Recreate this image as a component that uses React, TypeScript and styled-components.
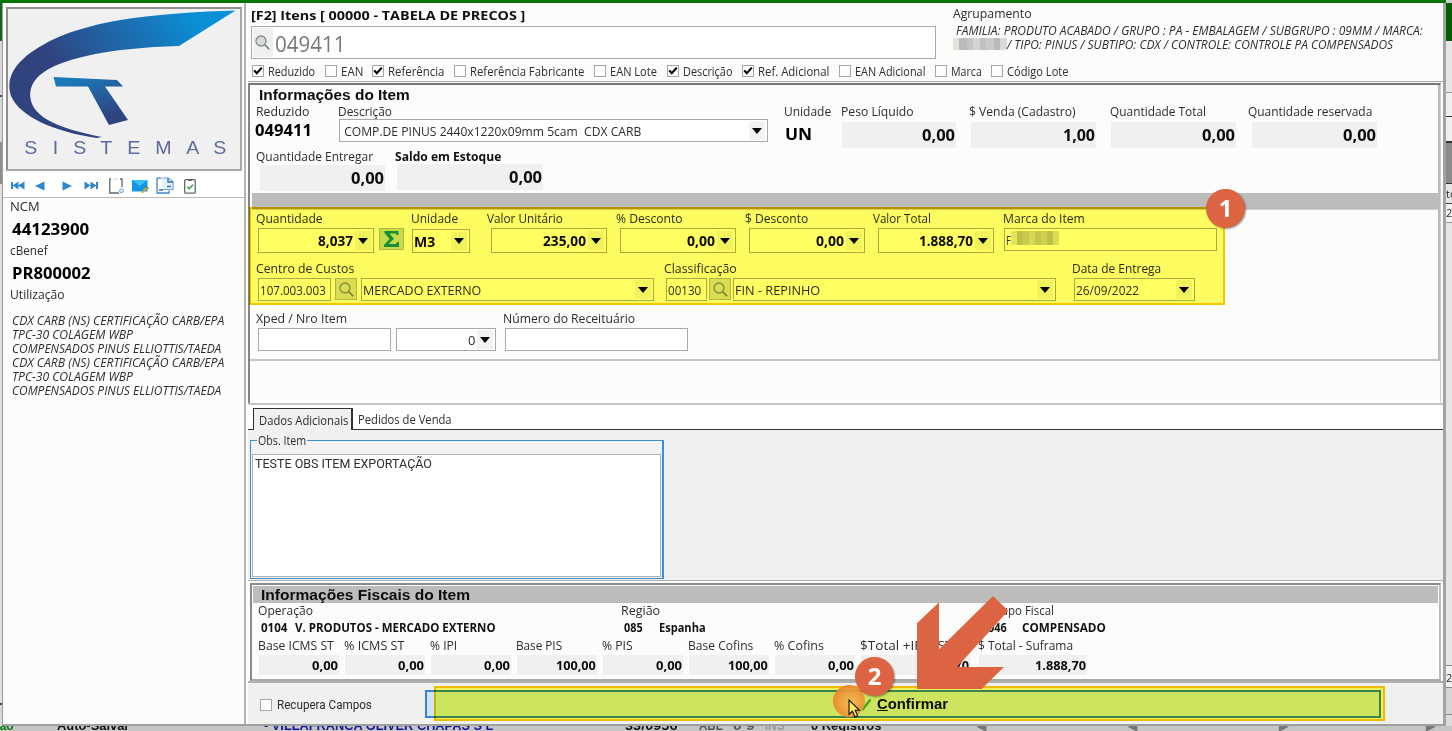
import { ReactNode, useLayoutEffect, useRef, useState } from "react";
import styled, { createGlobalStyle, css } from "styled-components";

const UI_FONT = `"Open Sans", "Noto Sans", sans-serif`;
const SANS_FONT = `"Liberation Sans", Arial, sans-serif`;

const GlobalStyle = createGlobalStyle`
  * {
    box-sizing: border-box;
  }
  body {
    margin: 0;
    overflow: hidden;
    font-family: ${UI_FONT};
    font-size: 13px;
    color: #2b2d30;
  }
`;

const FitOuter = styled.span<{ $w: number }>`
  display: inline-block;
  flex: none;
  width: ${({ $w }) => $w}px;
  text-align: left;
  white-space: pre;
`;

const FitInner = styled.span`
  display: inline-block;
  transform-origin: left center;
`;

// condenses or stretches a string to the width it has in the form
const Fit = ({ w, children }: { w: number; children: ReactNode }) => {
  const ref = useRef<HTMLSpanElement>(null);
  const [scale, setScale] = useState(1);
  useLayoutEffect(() => {
    if (ref.current?.offsetWidth) setScale(w / ref.current.offsetWidth);
  }, [w, children]);
  return (
    <FitOuter $w={w}>
      <FitInner ref={ref} style={{ transform: `scaleX(${scale})` }}>
        {children}
      </FitInner>
    </FitOuter>
  );
};

const Screen = styled.div`
  position: relative;
  display: grid;
  grid-template-columns: 2px 1444px 6px;
  grid-template-rows: 3px 723px 5px;
  width: 1452px;
  height: 731px;
  overflow: hidden;
  background: #e3e3e2;
`;

const TopStrip = styled.div`
  grid-column: 1 / -1;
  background: #047504;
  border-right: 6px solid #c9cfd2;
`;

const LeftStrip = styled.div`
  background: linear-gradient(
    #14681a 0 38px,
    #d8d8d8 38px 92px,
    #555 92px 94px,
    #d8d8d8 94px 139px,
    #8e8e8e 139px 181px,
    #e0e0e0 181px 700px,
    #444 700px 702px,
    #d8d8d8 702px
  );
`;

const RightStrip = styled.div`
  overflow: hidden;
  font-size: 11px;
  line-height: 14px;
  background: linear-gradient(
    #045f04 0 38px,
    #e6e6e6 38px 89px,
    #999 89px 90px,
    #f0f0f0 90px 113px,
    #333 113px 114px,
    #f0f0f0 114px 138px,
    #333 138px 140px,
    #8b8b8b 140px 180px,
    #333 180px 181px,
    #e6e6e6 181px 200px,
    #444 200px 201px,
    #f3f3f3 201px 219px,
    #999 219px 220px,
    #e6e6e6 220px 662px,
    #888 662px 663px,
    #f0f0f0 663px 684px,
    #888 684px 685px,
    #d5d5d5 685px 711px,
    #888 711px 712px,
    #dcdcdc 712px
  );

  p {
    margin: 184px 0 0;
  }
  p + p {
    margin-top: 5px;
  }
  p + p + p {
    margin-top: 451px;
  }
`;

const StatusStrip = styled.div`
  grid-column: 1 / -1;
  display: flex;
  overflow: hidden;
  background: #c6c6c5;
  font: bold 12px / 1px ${SANS_FONT};
  color: #111;
`;

const StatusItem = styled.span<{ $ml: number; $color?: string }>`
  margin-left: ${({ $ml }) => $ml}px;
  color: ${({ $color }) => $color || "#111"};
`;

const Dialog = styled.div`
  display: flex;
  background: #fcfcfa;
  border-left: 1px solid #9a9a9a;
  border-right: 3px solid #a3a3a2;
  border-bottom: 2px solid #a0a09f;
`;

const Sidebar = styled.aside`
  width: 243px;
  border-right: 2px solid #b4b4b3;
  padding: 4px 0 0 0;
`;

const LogoBox = styled.div`
  width: 236px;
  height: 164px;
  margin-left: 3px;
  border: 2px solid #8f8f8f;
  border-right-color: #a8a8a8;
  border-bottom-color: #a8a8a8;
  background: #f0f0f0;

  svg {
    display: block;
  }
`;

const LogoWord = styled.div`
  display: flex;
  justify-content: space-between;
  margin: -6px 14px 0 17px;
  font: 17.5px / 20px ${SANS_FONT};
  color: #5d6a9b;

  span {
    transform: scaleX(1.12);
  }
`;

const Toolbar = styled.div`
  display: flex;
  align-items: center;
  height: 27px;
  padding: 3px 0 0 8px;
  border-bottom: 1px solid #b9b9b9;
  background: #fff;

  svg {
    flex: none;
  }
`;

const SideLabel = styled.div`
  padding-left: 7px;
  font-size: 13px;
  line-height: 16px;
`;

const SideValue = styled.div`
  padding: 2px 0 0 9px;
  font-size: 16px;
  font-weight: 700;
  line-height: 26px;
  color: #000;
`;

const Usage = styled.div`
  padding: 12px 0 0 9px;
  font-size: 12px;
  font-style: italic;
  line-height: 14px;
`;

const Main = styled.main`
  flex: 1;
  min-width: 0;
  display: flex;
  flex-direction: column;
  padding-left: 2px;
`;

const Header = styled.header`
  display: flex;
  height: 79px;
  border-bottom: 1px solid #aaa;
`;

const SearchArea = styled.div`
  width: 699px;
  padding: 4px 0 0 3px;
`;

const Title = styled.div`
  font-size: 13px;
  font-weight: 700;
  line-height: 17px;
  color: #111;
`;

const SearchBox = styled.div`
  display: flex;
  align-items: center;
  width: 685px;
  height: 33px;
  margin-top: 2px;
  border: 1px solid #aaa;
  background: #fff;
  font-size: 22px;
  line-height: 28px;
  color: #777;
`;

const SearchIconPad = styled.span`
  display: flex;
  width: 20px;
  height: 29px;
  margin: 0 2px 0 1px;
  padding: 6px 0 0 1px;
  background: #f0f0f0;
`;

const CheckRow = styled.div`
  display: flex;
  height: 18px;
  margin: 4px 0 0 1px;
  width: 900px;
`;

const CheckItem = styled.label<{ $w?: number }>`
  display: flex;
  align-items: center;
  gap: 4px;
  flex: none;
  width: ${({ $w }) => ($w ? `${$w}px` : "auto")};
  font-size: 12px;
  line-height: 18px;
`;

const CheckSquare = styled.span`
  display: flex;
  width: 12px;
  height: 12px;
  margin-top: -3px;
  border: 1px solid #a6a6a6;
  background: #fff;
`;

const Grouping = styled.div`
  padding-top: 2px;
  padding-left: 6px;

  i {
    display: flex;
    font-size: 12px;
    line-height: 14px;
  }
`;

const GroupingLabel = styled.div`
  height: 19px;
  line-height: 16px;
`;

const Mosaic = styled.span<{ $w: number; $h: number; $tint?: boolean }>`
  width: ${({ $w }) => $w}px;
  height: ${({ $h }) => $h}px;
  background: linear-gradient(
    90deg,
    #e2e2de 0 12%,
    #b9bab9 12% 25%,
    #c4c4c2 25% 37%,
    #d4d5d3 37% 50%,
    #bfc1c3 50% 62%,
    #cacac9 62% 75%,
    #b8b9b9 75% 87%,
    #d9d9d6 87%
  );
  ${({ $tint }) =>
    $tint &&
    css`
      opacity: 0.9;
      margin: 2px 0 auto;
    `}
`;

const ItemPanel = styled.section`
  height: 320px;
  margin: 1px 2px 0 0;
  border-top: 2px solid #777;
  border-left: 2px solid #858585;
  border-right: 1px solid #d0d0d0;
`;

const ItemBody = styled.div`
  height: 276px;
  padding-left: 1px;
  border-bottom: 2px solid #c4c4c4;
  border-right: 2px solid #bbb;
`;

const PanelTitle = styled.h2`
  margin: 0;
  padding-left: 8px;
  font: bold 14.5px / 20px ${SANS_FONT};
  height: 18px;
  color: #0c0c0c;
`;

const Divider = styled.div`
  height: 17px;
  margin-left: 1px;
  border-bottom: 1px solid #d0d0d0;
  background: #bcbcba;
`;

const Row = styled.div<{ $h: number }>`
  display: flex;
  height: ${({ $h }) => $h}px;
  padding-left: 5px;
`;

const Cell = styled.div<{ $w: number }>`
  flex: none;
  width: ${({ $w }) => $w}px;
`;

const Label = styled.div<{ $bold?: boolean }>`
  height: 16px;
  font-size: 13px;
  line-height: 16px;
  white-space: nowrap;
  ${({ $bold }) => $bold && "font-weight: 700; color: #111;"}
`;

const Controls = styled.div<{ $ml?: number; $mt?: number }>`
  display: flex;
  align-items: flex-start;
  margin-left: ${({ $ml = 2 }) => $ml}px;
  margin-top: ${({ $mt = 2 }) => $mt}px;
`;

const ReadOnly = styled.div<{ $w: number; $h?: number; $size?: number }>`
  width: ${({ $w }) => $w}px;
  height: ${({ $h = 26 }) => $h}px;
  padding-right: 1px;
  background: #f0f0ef;
  font-size: ${({ $size = 16 }) => $size}px;
  font-weight: 700;
  line-height: ${({ $h = 26 }) => $h}px;
  text-align: right;
  color: #0c0c0c;
`;

const Strong = styled.div`
  font-size: 16px;
  font-weight: 700;
  line-height: 22px;
  color: #000;
`;

const Box = styled.div<{
  $w: number;
  $h?: number;
  $right?: boolean;
  $bold?: boolean;
  $mr?: number;
}>`
  display: flex;
  align-items: center;
  flex: none;
  width: ${({ $w }) => $w}px;
  height: ${({ $h = 23 }) => $h}px;
  margin-right: ${({ $mr = 0 }) => $mr}px;
  padding-left: 1px;
  border: 1px solid #a9a9a9;
  background: #fff;
  justify-content: ${({ $right }) => ($right ? "flex-end" : "flex-start")};
  font-size: 13px;
  ${({ $bold }) => $bold && "font-size: 14px; font-weight: 700; color: #0c0c0c;"}
`;

const ArrowPad = styled.span<{ $end?: boolean }>`
  display: flex;
  align-items: center;
  justify-content: center;
  width: 16px;
  height: 19px;
  margin: 0 2px 0 2px;
  background: #f2f2f2;
  ${({ $end }) => $end && "margin-left: auto;"}

  &::after {
    content: "";
    border: 5px solid transparent;
    border-top: 6px solid #000;
    border-bottom: 0;
  }
`;

const IconButton = styled.span<{ $w: number; $mr: number; $green?: boolean }>`
  display: flex;
  align-items: center;
  justify-content: center;
  width: ${({ $w }) => $w}px;
  height: 22px;
  margin-right: ${({ $mr }) => $mr}px;
  border: 1px solid #b5b5b0;
  background: ${({ $green }) => ($green ? "#c4dcb8" : "#dcdcd8")};
`;

const TabBar = styled.div`
  display: flex;
  align-items: flex-end;
  height: 27px;
  padding-left: 5px;
  border-top: 2px solid #c5c5c4;
  border-bottom: 1px solid #333;
  background: #fff;
`;

const Tab = styled.div<{ $active?: boolean }>`
  height: 21px;
  padding-left: 5px;
  font-size: 13px;
  line-height: 23px;
  ${({ $active }) =>
    $active &&
    css`
      width: 100px;
      height: 22px;
      margin-bottom: -1px;
      background: #f0f0ef;
      border: solid #333;
      border-width: 1px 2px 0 1px;
    `}
`;

const TabBody = styled.div`
  height: 151px;
  padding: 10px 0 0 2px;
  background: #f0f0ef;
  border-bottom: 1px solid #b0b0b0;
`;

const ObsGroup = styled.div`
  position: relative;
  width: 414px;
  height: 139px;
  padding: 13px 1px 1px;
  border: 1px solid #3c8fd2;
  border-right-width: 2px;
  background: #f3f3f3;
`;

const ObsLegend = styled.div`
  position: absolute;
  top: -9px;
  left: 6px;
  padding: 0 1px;
  font-size: 12px;
  line-height: 17px;
  background: #f1f1f1;
`;

const ObsText = styled.div`
  height: 123px;
  padding-left: 2px;
  border: 1px solid #b0b0b0;
  background: #fff;
  font: 13px / 17px Roboto, ${SANS_FONT};
`;

const FiscalPanel = styled.section`
  height: 98px;
  margin: 2px 2px 0 2px;
  padding: 1px;
  border: 2px solid #8a8a8a;
  border-right-color: #bbb;
  border-bottom-color: #aaa;
`;

const FiscalTitle = styled.h2`
  margin: 0;
  height: 17px;
  padding-left: 8px;
  background: #bcbcba;
  font: bold 14.5px / 18px ${SANS_FONT};
  color: #0c0c0c;
`;

const FiscalRow = styled.div<{ $h: number; $bold?: boolean }>`
  display: flex;
  height: ${({ $h }) => $h}px;
  padding-left: 5px;
  font-size: 12.5px;
  line-height: ${({ $h }) => $h}px;
  ${({ $bold }) => $bold && "font-weight: 700; font-size: 12px; color: #111;"}
`;

const Footer = styled.footer`
  display: flex;
  flex: 1;
  padding: 3px 0 0 12px;
  border-top: 2px solid #b0b0af;
  background: #f0f0ef;
`;

const RecoverField = styled.label`
  display: flex;
  align-items: center;
  gap: 5px;
  width: 165px;
  height: 37px;
  font: 13px Roboto, ${SANS_FONT};

  ${CheckSquare} {
    margin-top: 0;
  }
`;

const ConfirmButton = styled.button`
  display: flex;
  align-items: center;
  width: 956px;
  height: 28px;
  margin-top: 4px;
  padding: 0 0 0 431px;
  border: 2px solid #3b83c4;
  border-radius: 0;
  background: #cde4f6;
  font: bold 14px ${SANS_FONT};
  color: #0c0c0c;

  svg {
    margin-right: 5px;
  }
`;

// annotations lie over the dialog
const Highlight = styled.div<{ $x: number; $y: number; $w: number; $h: number }>`
  position: absolute;
  left: ${({ $x }) => $x}px;
  top: ${({ $y }) => $y}px;
  width: ${({ $w }) => $w}px;
  height: ${({ $h }) => $h}px;
  border: 2px solid #fcc800;
  background: #ffff62;
  mix-blend-mode: multiply;
`;

const Badge = styled.div<{ $x: number; $y: number }>`
  position: absolute;
  left: ${({ $x }) => $x}px;
  top: ${({ $y }) => $y}px;
  width: 39px;
  height: 39px;
  border-radius: 50%;
  background: #dc6443;
  box-shadow: 1px 1px 2px rgba(0, 0, 0, 0.4);
  font: bold 24px / 37px "Open Sans", sans-serif;
  text-align: center;
  color: #fff;
`;

const Glow = styled.div`
  position: absolute;
  left: 833px;
  top: 685px;
  width: 32px;
  height: 32px;
  border-radius: 50%;
  background: radial-gradient(
    circle at 55% 55%,
    rgba(240, 190, 80, 0.95),
    rgba(235, 140, 50, 0.95) 65%,
    rgba(225, 120, 50, 0.85)
  );
`;

const Marker = styled.svg`
  position: absolute;
  left: 840px;
  top: 590px;
`;

const Magnifier = () => (
  <svg width="17" height="17" viewBox="0 0 17 17" fill="none">
    <circle cx="7" cy="7" r="5" fill="#d5dddb" stroke="#858b88" strokeWidth="1.3" />
    <path d="M10.8 10.8L15.2 15.2" stroke="#777" strokeWidth="1.6" />
  </svg>
);

const Check = ({ label, w, tw, on }: { label: string; w?: number; tw: number; on?: boolean }) => (
  <CheckItem $w={w}>
    <CheckSquare>
      {on && (
        <svg width="10" height="10" viewBox="0 0 10 10" fill="none">
          <path d="M1.2 4.4L3.8 7.2L8.8 1.6" stroke="#000" strokeWidth="2.1" />
        </svg>
      )}
    </CheckSquare>
    <Fit w={tw}>{label}</Fit>
  </CheckItem>
);

const Logo = () => (
  <svg width="232" height="135" viewBox="8 9 232 135">
    <defs>
      <linearGradient id="arc" x1="40" y1="110" x2="190" y2="10" gradientUnits="userSpaceOnUse">
        <stop offset="0.2" stopColor="#30437f" />
        <stop offset="1" stopColor="#0b8fd6" />
      </linearGradient>
      <linearGradient id="tee" x1="80" y1="78" x2="100" y2="122" gradientUnits="userSpaceOnUse">
        <stop offset="0" stopColor="#1b79b9" />
        <stop offset="1" stopColor="#30437f" />
      </linearGradient>
    </defs>
    <path
      d="M235.500 10.500L179 46C108 48 68 58 47 70C30 80 27 94 33 106C41 121 66 130 102 137L97 138C55 132 20 117 11 96C4 74 20 56 52 40C96 19 160 13 235.500 10.500Z"
      fill="url(#arc)"
    />
    <path d="M53.500 77L117 80L123 86.500H105L128 120L109 125L88 86.500H56Z" fill="url(#tee)" />
  </svg>
);

const NavIcon = styled.svg<{ $ml?: number }>`
  margin-left: ${({ $ml = 0 }) => $ml}px;
`;

const NavIcons = () => (
  <>
    <NavIcon width="14" height="9" viewBox="0 0 14 9" fill="#2c87d0">
      <path d="M0 1H2V8H0ZM7.500 .5V8.500L1.500 4.500ZM13.500 .5V8.500L7 4.500Z" />
    </NavIcon>
    <NavIcon $ml={10} width="10" height="10" viewBox="0 0 10 10" fill="#2c87d0">
      <path d="M9.500 .5V9.500L0 5Z" />
    </NavIcon>
    <NavIcon $ml={17} width="10" height="10" viewBox="0 0 10 10" fill="#2c87d0">
      <path d="M.5 .5V9.500L10 5Z" />
    </NavIcon>
    <NavIcon $ml={12} width="14" height="9" viewBox="0 0 14 9" fill="#2c87d0">
      <path d="M.5 .5V8.500L6.500 4.500ZM6.500 .5V8.500L12.500 4.500ZM12 1H14V8H12Z" />
    </NavIcon>
    <NavIcon $ml={11} width="16" height="16" viewBox="0 0 16 16" fill="none">
      <path d="M2 1H.8V15H10M11 1H13V9" stroke="#666" strokeWidth="1.3" />
      <path d="M4 1H9" stroke="#ccc" />
      <circle cx="12.5" cy="12.8" r="2" fill="#d5eafb" stroke="#69aee8" />
    </NavIcon>
    <NavIcon $ml={7} width="17" height="16" viewBox="0 0 17 16">
      <path d="M0 2H15.500V13.500H0Z" fill="#1594e0" />
      <path d="M0 2H15.500L7.800 8Z" fill="#35c4f5" />
      <path d="M9 14.500L14.800 8.200L16.500 9.800L11 15Z" fill="#d9a62b" />
      <path d="M14.300 8.700L16.500 10.600" stroke="#444" />
    </NavIcon>
    <NavIcon $ml={7} width="18" height="17" viewBox="0 0 18 17" fill="none">
      <path d="M5.500 1.200H1V16H13V13.500" stroke="#3f86cd" strokeWidth="1.3" />
      <path d="M6.500 1H12.500L17 4.500V12.500H6.500" fill="#e6f1fb" stroke="#6ba5de" strokeWidth="1.1" />
      <path d="M12 1V5H17M3 13H7M11 9.500H15" stroke="#2f72b8" strokeWidth="1.3" />
    </NavIcon>
    <NavIcon $ml={10} width="12" height="16" viewBox="0 0 12 16" fill="none">
      <rect x=".7" y="1.7" width="10.5" height="13.5" rx="1" fill="#fff" stroke="#5d6a66" strokeWidth="1.3" />
      <path d="M4 1H8V3H4Z" fill="#5d6a66" />
      <path d="M3.200 8.800L5.200 10.800L9 6.800" stroke="#31954b" strokeWidth="1.5" />
    </NavIcon>
  </>
);

const Amount = ({ w, tw, value, mr }: { w: number; tw: number; value: string; mr?: number }) => (
  <Box $w={w} $h={25} $right $bold $mr={mr}>
    <Fit w={tw}>{value}</Fit>
    <ArrowPad />
  </Box>
);

const usage: [string, number][] = [
  ["CDX CARB (NS) CERTIFICAÇÃO CARB/EPA", 212],
  ["TPC-30 COLAGEM WBP", 121],
  ["COMPENSADOS PINUS ELLIOTTIS/TAEDA", 209],
];

const stock = [
  { label: "Peso Líquido", tw: 73, cell: 128, ml: 1, w: 114, value: "0,00", vw: 33 },
  { label: "$ Venda (Cadastro)", tw: 107, cell: 141, ml: 2, w: 125, value: "1,00", vw: 32 },
  { label: "Quantidade Total", tw: 96, cell: 138, ml: 1, w: 125, value: "0,00", vw: 33 },
  { label: "Quantidade reservada", tw: 124, cell: 140, ml: 4, w: 125, value: "0,00", vw: 33 },
];

const taxes = [
  { label: "Base ICMS ST", tw: 76, cell: 86, w: 80, value: "0,00", vw: 26 },
  { label: "% ICMS ST", tw: 60, cell: 86, w: 80, value: "0,00", vw: 26 },
  { label: "% IPI", tw: 27, cell: 86, w: 80, value: "0,00", vw: 26 },
  { label: "Base PIS", tw: 46, cell: 86, w: 80, value: "100,00", vw: 40 },
  { label: "% PIS", tw: 31, cell: 86, w: 80, value: "0,00", vw: 26 },
  { label: "Base Cofins", tw: 65, cell: 86, w: 80, value: "100,00", vw: 40 },
  { label: "% Cofins", tw: 50, cell: 86, w: 80, value: "0,00", vw: 26 },
  { label: "$Total +IPI +ST", tw: 93, cell: 118, w: 109, value: "1.888,70", vw: 51 },
  { label: "$ Total - Suframa", tw: 95, cell: 118, w: 108, value: "1.888,70", vw: 51 },
];

const App = () => (
  <>
    <GlobalStyle />
    <Screen>
      <TopStrip />
      <LeftStrip />
      <Dialog>
        <Sidebar>
          <LogoBox>
            <Logo />
            <LogoWord>
              {"SISTEMAS".split("").map((c, i) => (
                <span key={i}>{c}</span>
              ))}
            </LogoWord>
          </LogoBox>
          <Toolbar>
            <NavIcons />
          </Toolbar>
          <SideLabel><Fit w={30}>NCM</Fit></SideLabel>
          <SideValue><Fit w={77}>44123900</Fit></SideValue>
          <SideLabel><Fit w={38}>cBenef</Fit></SideLabel>
          <SideValue><Fit w={79}>PR800002</Fit></SideValue>
          <SideLabel><Fit w={55}>Utilização</Fit></SideLabel>
          <Usage>
            {[...usage, ...usage].map(([line, w], i) => (
              <div key={i}>
                <Fit w={w}>{line}</Fit>
              </div>
            ))}
          </Usage>
        </Sidebar>

        <Main>
          <Header>
            <SearchArea>
              <Title><Fit w={274}>[F2] Itens [ 00000 - TABELA DE PRECOS ]</Fit></Title>
              <SearchBox>
                <SearchIconPad><Magnifier /></SearchIconPad>
                <Fit w={70}>049411</Fit>
              </SearchBox>
              <CheckRow>
                <Check label="Reduzido" w={73} tw={47} on />
                <Check label="EAN" w={47} tw={22} />
                <Check label="Referência" w={82} tw={56} on />
                <Check label="Referência Fabricante" w={140} tw={114} />
                <Check label="EAN Lote" w={73} tw={47} />
                <Check label="Descrição" w={75} tw={49} on />
                <Check label="Ref. Adicional" w={97} tw={71} on />
                <Check label="EAN Adicional" w={96} tw={70} />
                <Check label="Marca" w={56} tw={31} />
                <Check label="Código Lote" tw={62} />
              </CheckRow>
            </SearchArea>
            <Grouping>
              <GroupingLabel><Fit w={79}>Agrupamento</Fit></GroupingLabel>
              <i>
                <Fit w={470}>
                  {" FAMILIA: PRODUTO ACABADO / GRUPO : PA - EMBALAGEM / SUBGRUPO : 09MM / MARCA:"}
                </Fit>
              </i>
              <i>
                <Mosaic $w={54} $h={12} />
                <Fit w={386}>/ TIPO: PINUS / SUBTIPO: CDX / CONTROLE: CONTROLE PA COMPENSADOS</Fit>
              </i>
            </Grouping>
          </Header>

          <ItemPanel>
            <ItemBody>
              <PanelTitle><Fit w={151}>Informações do Item</Fit></PanelTitle>
              <Row $h={45}>
                <Cell $w={82}>
                  <Label><Fit w={53}>Reduzido</Fit></Label>
                  <Controls $ml={-1} $mt={0}>
                    <Strong><Fit w={57}>049411</Fit></Strong>
                  </Controls>
                </Cell>
                <Cell $w={446}>
                  <Label><Fit w={54}>Descrição</Fit></Label>
                  <Controls $ml={1} $mt={0}>
                    <Box $w={429} $h={23}>
                      <Fit w={300}>{" COMP.DE PINUS 2440x1220x09mm 5cam  CDX CARB"}</Fit>
                      <ArrowPad $end />
                    </Box>
                  </Controls>
                </Cell>
                <Cell $w={57}>
                  <Label><Fit w={47}>Unidade</Fit></Label>
                  <Controls $ml={1} $mt={4}>
                    <Strong><Fit w={27}>UN</Fit></Strong>
                  </Controls>
                </Cell>
                {stock.map((s) => (
                  <Cell key={s.label} $w={s.cell}>
                    <Label><Fit w={s.tw}>{s.label}</Fit></Label>
                    <Controls $ml={s.ml} $mt={3}>
                      <ReadOnly $w={s.w}><Fit w={s.vw}>{s.value}</Fit></ReadOnly>
                    </Controls>
                  </Cell>
                ))}
              </Row>
              <Row $h={45}>
                <Cell $w={139}>
                  <Label><Fit w={117}>Quantidade Entregar</Fit></Label>
                  <Controls $ml={4} $mt={1}>
                    <ReadOnly $w={125}><Fit w={33}>0,00</Fit></ReadOnly>
                  </Controls>
                </Cell>
                <Cell $w={160}>
                  <Label $bold><Fit w={106}>Saldo em Estoque</Fit></Label>
                  <Controls $mt={0}>
                    <ReadOnly $w={146}><Fit w={33}>0,00</Fit></ReadOnly>
                  </Controls>
                </Cell>
              </Row>
              <Divider />
              <Row $h={50}>
                <Cell $w={155}>
                  <Label><Fit w={67}>Quantidade</Fit></Label>
                  <Controls>
                    <Amount w={116} tw={35} value="8,037" mr={5} />
                    <IconButton $w={25} $mr={0} $green>
                      <svg width="17" height="18" viewBox="0 0 17 18">
                        <path
                          d="M1.500 1H15.500V5H13.500L13 3.500H6.500L11 8.800L5.500 14H13L14 12H16V17H1V15L6.500 9L1.500 3Z"
                          fill="#1a8d83"
                        />
                      </svg>
                    </IconButton>
                  </Controls>
                </Cell>
                <Cell $w={76}>
                  <Label><Fit w={47}>Unidade</Fit></Label>
                  <Controls $ml={1} $mt={3}>
                    <Box $w={58} $h={24} $bold>
                      <Fit w={21}>M3</Fit>
                      <ArrowPad $end />
                    </Box>
                  </Controls>
                </Cell>
                <Cell $w={129}>
                  <Label><Fit w={76}>Valor Unitário</Fit></Label>
                  <Controls $ml={4}><Amount w={116} tw={43} value="235,00" /></Controls>
                </Cell>
                <Cell $w={129}>
                  <Label><Fit w={67}>% Desconto</Fit></Label>
                  <Controls $ml={4}><Amount w={116} tw={28} value="0,00" /></Controls>
                </Cell>
                <Cell $w={128}>
                  <Label><Fit w={63}>$ Desconto</Fit></Label>
                  <Controls $ml={4}><Amount w={116} tw={28} value="0,00" /></Controls>
                </Cell>
                <Cell $w={130}>
                  <Label><Fit w={58}>Valor Total</Fit></Label>
                  <Controls $ml={5}><Amount w={116} tw={54} value="1.888,70" /></Controls>
                </Cell>
                <Cell $w={216}>
                  <Label><Fit w={82}>Marca do Item</Fit></Label>
                  <Controls $ml={1}>
                    <Box $w={213}>
                      <Fit w={5}>F</Fit>
                      <Mosaic $w={48} $h={14} $tint />
                    </Box>
                  </Controls>
                </Cell>
              </Row>
              <Row $h={50}>
                <Cell $w={408}>
                  <Label><Fit w={98}>Centro de Custos</Fit></Label>
                  <Controls>
                    <Box $w={73} $mr={4}><Fit w={66}>107.003.003</Fit></Box>
                    <IconButton $w={22} $mr={4}><Magnifier /></IconButton>
                    <Box $w={293}>
                      <Fit w={118}>MERCADO EXTERNO</Fit>
                      <ArrowPad $end />
                    </Box>
                  </Controls>
                </Cell>
                <Cell $w={408}>
                  <Label><Fit w={73}>Classificação</Fit></Label>
                  <Controls>
                    <Box $w={41} $mr={2}><Fit w={33}>00130</Fit></Box>
                    <IconButton $w={22} $mr={2}><Magnifier /></IconButton>
                    <Box $w={323}>
                      <Fit w={85}>FIN - REPINHO</Fit>
                      <ArrowPad $end />
                    </Box>
                  </Controls>
                </Cell>
                <Cell $w={130}>
                  <Label><Fit w={89}>Data de Entrega</Fit></Label>
                  <Controls>
                    <Box $w={121}>
                      <Fit w={63}>26/09/2022</Fit>
                      <ArrowPad $end />
                    </Box>
                  </Controls>
                </Cell>
              </Row>
              <Row $h={48}>
                <Cell $w={247}>
                  <Label><Fit w={91}>Xped / Nro Item</Fit></Label>
                  <Controls>
                    <Box $w={133} $mr={5} />
                    <Box $w={100} $right>
                      <Fit w={7}>0</Fit>
                      <ArrowPad />
                    </Box>
                  </Controls>
                </Cell>
                <Cell $w={190}>
                  <Label><Fit w={132}>Número do Receituário</Fit></Label>
                  <Controls><Box $w={183} /></Controls>
                </Cell>
              </Row>
            </ItemBody>
          </ItemPanel>

          <TabBar>
            <Tab $active><Fit w={89}>Dados Adicionais</Fit></Tab>
            <Tab><Fit w={94}>Pedidos de Venda</Fit></Tab>
          </TabBar>
          <TabBody>
            <ObsGroup>
              <ObsLegend><Fit w={48}>Obs. Item</Fit></ObsLegend>
              <ObsText><Fit w={177}>TESTE OBS ITEM EXPORTAÇÃO</Fit></ObsText>
            </ObsGroup>
          </TabBody>

          <FiscalPanel>
            <FiscalTitle><Fit w={209}>Informações Fiscais do Item</Fit></FiscalTitle>
            <FiscalRow $h={16}>
              <Cell $w={363}><Fit w={55}>Operação</Fit></Cell>
              <Cell $w={367}><Fit w={39}>Região</Fit></Cell>
              <Cell $w={100}><Fit w={66}>Grupo Fiscal</Fit></Cell>
            </FiscalRow>
            <FiscalRow $h={18} $bold>
              <Cell $w={37}>&nbsp;<Fit w={26}>0104</Fit></Cell>
              <Cell $w={329}><Fit w={201}>V. PRODUTOS - MERCADO EXTERNO</Fit></Cell>
              <Cell $w={35}><Fit w={19}>085</Fit></Cell>
              <Cell $w={329}><Fit w={47}>Espanha</Fit></Cell>
              <Cell $w={34}><Fit w={19}>046</Fit></Cell>
              <Cell $w={100}><Fit w={84}>COMPENSADO</Fit></Cell>
            </FiscalRow>
            <FiscalRow $h={40}>
              {taxes.map((t) => (
                <Cell key={t.label} $w={t.cell}>
                  <Label><Fit w={t.tw}>{t.label}</Fit></Label>
                  <Controls $ml={1} $mt={2}>
                    <ReadOnly $w={t.w} $h={20} $size={13}><Fit w={t.vw}>{t.value}</Fit></ReadOnly>
                  </Controls>
                </Cell>
              ))}
            </FiscalRow>
          </FiscalPanel>

          <Footer>
            <RecoverField>
              <CheckSquare />
              <Fit w={95}>Recupera Campos</Fit>
            </RecoverField>
            <ConfirmButton>
              <svg width="14" height="13" viewBox="0 0 14 13" fill="none">
                <path d="M1 7L5 11L12.500 1.500" stroke="#3fae2a" strokeWidth="2.5" />
              </svg>
              <Fit w={71}><u>C</u>onfirmar</Fit>
            </ConfirmButton>
          </Footer>
        </Main>
      </Dialog>
      <RightStrip>
        <p>to</p>
        <p>2</p>
        <p>2</p>
      </RightStrip>
      <StatusStrip>
        <StatusItem $ml={-7} $color="#0a7a0a">são</StatusItem>
        <StatusItem $ml={43}><Fit w={72}>Auto-Salvar</Fit></StatusItem>
        <StatusItem $ml={135} $color="#17179a"><Fit w={229}>- VILLAFRANCA OLIVER CHAPAS S L</Fit></StatusItem>
        <StatusItem $ml={132}><Fit w={52}>33/0956</Fit></StatusItem>
        <StatusItem $ml={22} $color="#555"><Fit w={24}>ABL</Fit></StatusItem>
        <StatusItem $ml={10} $color="#555"><Fit w={22}>0 9</Fit></StatusItem>
        <StatusItem $ml={10} $color="#999"><Fit w={20}>INS</Fit></StatusItem>
        <StatusItem $ml={26}><Fit w={70}>0 Registros</Fit></StatusItem>
        <StatusItem $ml={96} $color="#777">◀</StatusItem>
        <StatusItem $ml={142} $color="#777">◀</StatusItem>
        <StatusItem $ml={142} $color="#777">▶</StatusItem>
        <StatusItem $ml={138} $color="#777">▶</StatusItem>
      </StatusStrip>

      <Highlight $x={249} $y={207} $w={976} $h={98} />
      <Highlight $x={434} $y={686} $w={951} $h={35} />
      <Glow />
      <Marker width="180" height="130" viewBox="840 590 180 130">
        <path
          d="M993 596L1008.300 610.700L957 667H1004L981.700 689H917V623.300L939 602.300V649.300Z"
          fill="#dc6443"
        />
        <path
          d="M849 700V714.500L852.400 711.300L855 717L857.600 715.800L855.200 710.300H859.500Z"
          fill="#ffe860"
          stroke="#111"
          strokeWidth="1.1"
        />
      </Marker>
      <Badge $x={1206} $y={189}>1</Badge>
      <Badge $x={855} $y={657}>2</Badge>
    </Screen>
  </>
);

export default App;
